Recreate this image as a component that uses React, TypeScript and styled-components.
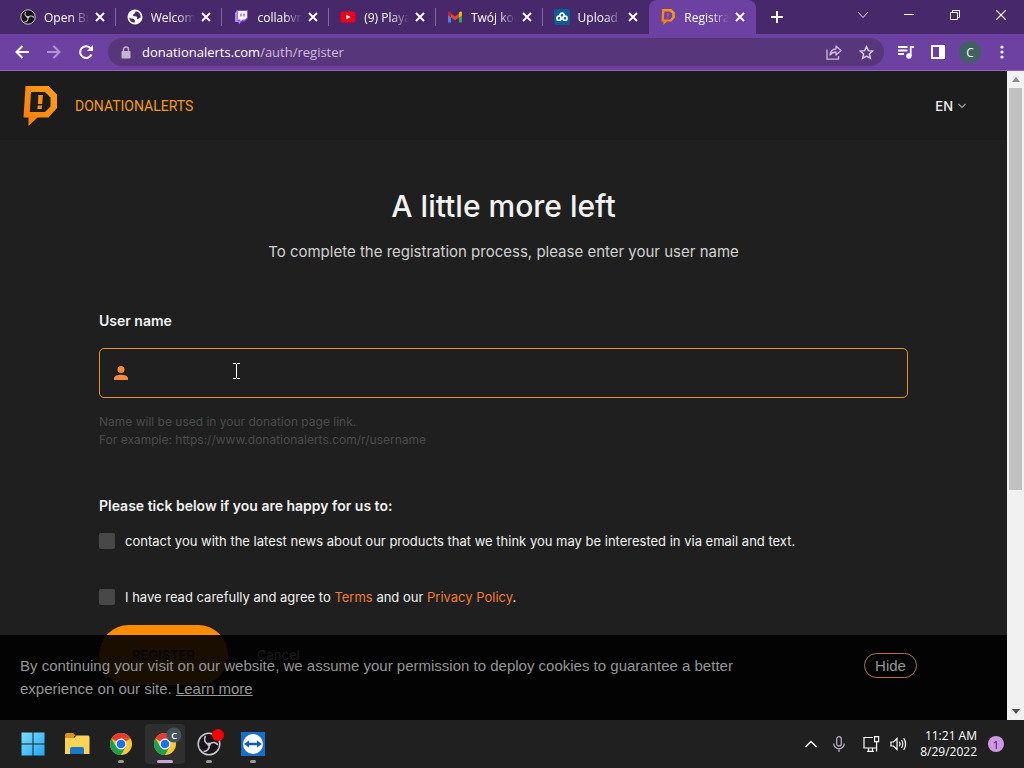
import React from "react";
import styled, { createGlobalStyle } from "styled-components";

const ui = '"Open Sans", "Noto Sans", sans-serif';
const inter = 'Inter, "Liberation Sans", sans-serif';

const Global = createGlobalStyle`
  * { box-sizing: border-box; }
  body { margin: 0; background: #1f1f1f; font-family: ${ui}; }
  button { border: 0; background: none; padding: 0; color: inherit; font: inherit; }
  a { color: inherit; text-decoration: none; }
  svg { display: block; flex: none; }
  h1, h2, p { margin: 0; }
`;

const Desktop = styled.div`
  display: flex;
  flex-direction: column;
  height: 100vh;
  overflow: hidden;
`;

/* Browser window */
const TabStrip = styled.header`
  display: flex;
  align-items: stretch;
  height: 34px;
  padding-left: 9px;
  background: #47296b;
  color: #fff;
`;
const Tabs = styled.div`
  display: flex;
  flex: 0 1 747px;
  min-width: 0;
`;
const Tab = styled.div<{ $active?: boolean; $last?: boolean }>`
  display: flex;
  align-items: center;
  flex: 1 1 0;
  min-width: 0;
  padding: 0 8px 0 11px;
  font-size: 12px;
  border-radius: 8px 8px 0 0;
  background-color: ${(p) => (p.$active ? "#6c41a2" : "transparent")};
  background-image: ${(p) =>
    p.$active || p.$last ? "none" : "linear-gradient(#8467a6, #8467a6)"};
  background-size: 1px 18px;
  background-position: right center;
  background-repeat: no-repeat;
`;
const TabTitle = styled.span`
  flex: 1;
  min-width: 0;
  margin: 0 3px 0 8px;
  overflow: hidden;
  white-space: nowrap;
  mask-image: linear-gradient(to right, #000 60%, transparent);
`;
const IconButton = styled.button<{ $w?: number }>`
  display: flex;
  align-items: center;
  justify-content: center;
  flex: none;
  width: ${(p) => p.$w ?? 16}px;
  align-self: center;
`;
const WindowButtons = styled.div`
  display: flex;
  margin-left: auto;
  height: 30px;
`;
const Toolbar = styled.div`
  display: flex;
  align-items: center;
  height: 37px;
  padding: 0 6px;
  background: #6c41a2;
  border-bottom: 1px solid #8a6ab0;
  color: #fff;
`;
const AddressBar = styled.div`
  display: flex;
  align-items: center;
  flex: 1;
  height: 28px;
  margin: 0 6px;
  padding: 0 2px 0 13px;
  border-radius: 14px;
  background: #58367b;
  color: #cdbddf;
`;
const Address = styled.div`
  flex: 1;
  margin-left: 11px;
  font-size: 13px;
  line-height: 20px;
  white-space: nowrap;
  b { font-weight: 400; color: #fff; }
`;
const Avatar = styled.span`
  display: grid;
  place-items: center;
  width: 22px;
  height: 22px;
  border-radius: 50%;
  background: #3f6161;
  color: #fff;
  font-size: 12px;
`;

/* Site */
const Viewport = styled.div`
  display: flex;
  flex: 1;
  min-height: 0;
`;
const Site = styled.div`
  position: relative;
  flex: 1;
  min-width: 0;
  overflow: hidden;
  background: #1f1f1f;
  color: #f2f2f2;
  font-family: ${inter};
`;
const SiteHeader = styled.div`
  display: flex;
  align-items: center;
  height: 69px;
  padding: 0 41px 0 22px;
  background: #1c1c1c;
`;
const Brand = styled.a`
  display: flex;
  align-items: center;
  gap: 17px;
  color: #f29a1c;
  font-family: Roboto, sans-serif;
  font-size: 14px;
`;
const Language = styled.button`
  display: flex;
  align-items: center;
  gap: 5px;
  margin-left: auto;
  font-size: 13px;
  font-weight: 500;
`;
const Content = styled.main`
  padding: 44px 99px 0;
`;
const Title = styled.h1`
  font-size: 30px;
  font-weight: 500;
  line-height: 44px;
  text-align: center;
`;
const Subtitle = styled.p`
  margin-top: 12px;
  color: #d2d2d2;
  font-size: 15px;
  line-height: 24px;
  text-align: center;
`;
const FieldLabel = styled.label`
  display: block;
  margin-top: 47px;
  font-size: 14px;
  font-weight: 600;
  line-height: 20px;
`;
const Field = styled.div`
  display: flex;
  align-items: center;
  height: 50px;
  margin-top: 17px;
  padding-left: 14px;
  border: 1px solid #e8922a;
  border-radius: 5px;
`;
const TextInput = styled.input`
  flex: 1;
  height: 100%;
  margin-left: 10px;
  border: 0;
  outline: 0;
  background: none;
  color: #fff;
  font: 14px ${inter};
`;
const Hint = styled.p`
  margin-top: 15px;
  color: #4b4b4b;
  font-size: 12px;
  line-height: 18px;
`;
const Consent = styled.h2`
  margin-top: 47px;
  font-size: 14px;
  font-weight: 600;
  line-height: 20px;
`;
const CheckRow = styled.div<{ $top: number }>`
  display: flex;
  align-items: center;
  gap: 10px;
  margin-top: ${(p) => p.$top}px;
  font-size: 13px;
  line-height: 20px;
  a { color: #f07c32; }
`;
const Checkbox = styled.input`
  appearance: none;
  flex: none;
  width: 16px;
  height: 16px;
  margin: 0;
  border-radius: 2px;
  background: #484848;
`;
const Actions = styled.div`
  display: flex;
  align-items: center;
  gap: 29px;
  margin-top: 18px;
  font-size: 13px;
`;
const Submit = styled.button`
  width: 129px;
  height: 60px;
  border-radius: 30px;
  background: linear-gradient(#ff8a00, #f59c07);
  color: #4a3c2c;
  font-size: 13px;
  font-weight: 600;
`;
const CookieBar = styled.aside`
  position: absolute;
  inset: auto 0 0 0;
  display: flex;
  align-items: flex-start;
  justify-content: space-between;
  padding: 18px 90px 20px 20px;
  background: rgba(0, 0, 0, 0.9);
  color: #969696;
  font: 15px/23px "Liberation Sans", sans-serif;
  a { text-decoration: underline; }
`;
const CookieText = styled.p`
  max-width: 730px;
  padding-top: 1px;
`;
const HideButton = styled.button`
  width: 53px;
  height: 25px;
  border: 1px solid #b5714f;
  border-radius: 13px;
`;
const TextCursor = styled.svg`
  position: absolute;
  left: 233px;
  top: 292px;
`;
const Scrollbar = styled.div`
  display: flex;
  flex-direction: column;
  align-items: center;
  width: 17px;
  background: #f1f1f1;
`;
const ScrollArrow = styled.svg`
  margin: 6px 0;
`;
const Thumb = styled.div`
  width: 13px;
  height: 62%;
  margin-bottom: auto;
  background: #c1c1c1;
`;

/* Taskbar */
const Taskbar = styled.footer`
  display: flex;
  align-items: center;
  height: 48px;
  padding: 0 20px 0 13px;
  background: #202020;
  color: #fff;
`;
const Apps = styled.div`
  display: flex;
  gap: 4px;
`;
const AppButton = styled.button<{ $active?: boolean; $mark?: boolean }>`
  display: flex;
  flex-direction: column;
  align-items: center;
  width: 40px;
  height: 40px;
  padding-top: 8px;
  border-radius: 4px;
  background: ${(p) => (p.$active ? "#2f2f2f" : "none")};
  &::after {
    content: "";
    width: ${(p) => (p.$active ? 16 : 6)}px;
    height: 3px;
    margin-top: 4px;
    border-radius: 2px;
    background: ${(p) => (p.$active ? "#c9a5d8" : p.$mark ? "#9a9a9a" : "transparent")};
  }
`;
const Tray = styled.div`
  display: flex;
  align-items: center;
  margin-left: auto;
`;
const Clock = styled.time`
  margin: 0 11px 0 13px;
  font-size: 12px;
  line-height: 16px;
  text-align: right;
`;
const Notice = styled.span`
  display: grid;
  place-items: center;
  width: 16px;
  height: 16px;
  border-radius: 50%;
  background: #cf97e6;
  color: #2a1833;
  font-size: 11px;
`;

const Close = () => (
  <svg width="10" height="10" viewBox="0 0 10 10" stroke="#fff" strokeWidth="1.8">
    <path d="M1 1l8 8M9 1l-8 8" />
  </svg>
);

const ObsIcon = ({ size }: { size: number }) => (
  <svg width={size} height={size} viewBox="0 0 24 24" fill="none">
    <circle cx="12" cy="12" r="10.8" fill="#17151a" stroke="#c9c6cc" strokeWidth="1.5" />
    <g stroke="#c9c6cc" strokeWidth="1.6">
      <path d="M12 12.5C7.5 11 6.5 7.5 8.5 4" />
      <path d="M12 12.5C15.5 9.3 19 10.2 21 13" />
      <path d="M12 12.5C12.8 17.2 10 19.5 6.5 19.5" />
    </g>
    <circle cx="12" cy="12.4" r="1.8" fill="#c9c6cc" />
  </svg>
);

const GlobeIcon = () => (
  <svg width="16" height="16" viewBox="0 0 16 16">
    <circle cx="8" cy="8" r="7.5" fill="#fff" />
    <path d="M9 2.200C7.500 3 8.500 4.500 6.800 5.200S6 7.200 8 7.300 10.500 8 10 9.500 12 9.500 13.800 8.200C13.800 5 12 2.700 9 2.200ZM2.200 8.500C3.500 9.800 6 9 7 10.300S8.500 12 7.200 13.800C4.500 13.500 2.400 11.500 2.200 8.500Z" fill="#47296b" />
  </svg>
);

const TwitchIcon = () => (
  <svg width="16" height="16" viewBox="0 0 16 16">
    <path d="M4 1h11v8l-3.5 3.5H9L6 15.5v-3H3V4Z" fill="#9146ff" />
    <path d="M2 4l2.5-3v11H7v3l-2-2H2Z" fill="#b58aff" />
    <path d="M5 2h9v6.5L12 10.500H9.500l-2 2v-2H5Z" fill="#fff" />
    <path d="M8 4.500v3M11 4.500v3" stroke="#9146ff" strokeWidth="1.3" />
  </svg>
);

const YoutubeIcon = () => (
  <svg width="16" height="16" viewBox="0 0 16 16">
    <rect x="0.5" y="2.5" width="15" height="11" rx="2.8" fill="#f00018" />
    <path d="M6.3 5.6v4.800L10.500 8Z" fill="#fff" />
  </svg>
);

const GmailIcon = () => (
  <svg width="16" height="16" viewBox="0 0 16 16">
    <path d="M1 4v9.500h3V7Z" fill="#4285f4" />
    <path d="M15 4v9.500h-3V7Z" fill="#34a853" />
    <path d="M4 4.500v4L8 11.300l4-2.800v-4L8 7.500Z" fill="#ea4335" />
    <path d="M1 4c0-2 1.500-2 3-.5v5L1 6.200Z" fill="#c5221f" />
    <path d="M15 4c0-2-1.500-2-3-.5v5l3-2.300Z" fill="#fbbc04" />
  </svg>
);

const UploadIcon = () => (
  <svg width="16" height="16" viewBox="0 0 16 16" fill="none" stroke="#fff" strokeWidth="1.6">
    <rect width="16" height="16" rx="3" fill="#0c5c99" stroke="none" />
    <circle cx="5" cy="9.200" r="2.100" />
    <circle cx="11" cy="9.200" r="2.100" />
    <path d="M6 7a2.200 2.200 0 1 1 4.200 0L6.800 10.500" />
  </svg>
);

const AlertsIcon = ({ w, h, tab }: { w: number; h: number; tab?: boolean }) => (
  <svg width={w} height={h} viewBox="0 0 35 40">
    <defs>
      <linearGradient id="brandFill" x1="0" y1="1" x2="1" y2="0">
        <stop stopColor="#f57b0b" />
        <stop offset="1" stopColor="#fda019" />
      </linearGradient>
    </defs>
    <path
      fill="url(#brandFill)"
      fillRule="evenodd"
      d="M3 0H26L34.500 8.500V22L26 31.500H15L6 40V31.500H1ZM8.500 6L7.300 26H22.500L28 20.500V11.500L22.500 6Z"
    />
    {tab ? (
      <path d="M15 10h6l-1 9h-6ZM13 21h6v3h-6Z" fill="#a04fae" />
    ) : (
      <path d="M15.800 9h4.600l-.7 9h-4.300ZM15.200 19.600h4.300l-.3 3.400h-4.300Z" fill="#f89016" />
    )}
  </svg>
);

const ChromeIcon = ({ badge }: { badge?: boolean }) => (
  <svg width="24" height="24" viewBox="0 0 24 24" overflow="visible">
    <circle cx="12" cy="12" r="11" fill="#fcc934" />
    <path d="M12 12L2.470 6.500A11 11 0 0 1 21.530 6.500L12 6.500Z" fill="#e33b2e" />
    <path d="M21.530 6.500H12V12Z" fill="#e33b2e" />
    <path d="M2.470 6.500A11 11 0 0 0 12 23L16.760 14.750 12 12 7.240 14.750Z" fill="#1e9e4a" />
    <circle cx="12" cy="12" r="5.500" fill="#fff" />
    <circle cx="12" cy="12" r="4.300" fill="#1a73e8" />
    {badge && (
      <>
        <circle cx="21" cy="3" r="7.500" fill="#44545c" />
        <text x="21" y="6.500" fill="#fff" fontSize="9" fontWeight="600" textAnchor="middle" fontFamily="Open Sans, sans-serif">C</text>
      </>
    )}
  </svg>
);

const tabs = [
  { title: "Open Broadcaster", icon: <ObsIcon size={16} /> },
  { title: "Welcome to", icon: <GlobeIcon /> },
  { title: "collabvm", icon: <TwitchIcon /> },
  { title: "(9) Playa", icon: <YoutubeIcon /> },
  { title: "Twój kod", icon: <GmailIcon /> },
  { title: "Upload", icon: <UploadIcon /> },
  { title: "Registration", icon: <AlertsIcon w={16} h={16} tab /> },
];

export default function App() {
  return (
    <Desktop>
      <Global />
      <TabStrip>
        <Tabs>
          {tabs.map((t, i) => (
            <Tab key={t.title} $active={i === 6} $last={i === 5}>
              {t.icon}
              <TabTitle>{t.title}</TabTitle>
              <IconButton aria-label="Close tab"><Close /></IconButton>
            </Tab>
          ))}
        </Tabs>
        <IconButton $w={42} aria-label="New tab">
          <svg width="12" height="12" viewBox="0 0 12 12" stroke="#fff" strokeWidth="2"><path d="M6 0v12M0 6h12" /></svg>
        </IconButton>
        <WindowButtons>
          <IconButton $w={46} aria-label="Search tabs">
            <svg width="12" height="8" viewBox="0 0 12 8" fill="none" stroke="#e6dcf0"><path d="M1 1l5 5.500L11 1" /></svg>
          </IconButton>
          <IconButton $w={46} aria-label="Minimize">
            <svg width="10" height="10" viewBox="0 0 10 10" stroke="#fff"><path d="M0 4.500h10" /></svg>
          </IconButton>
          <IconButton $w={46} aria-label="Restore">
            <svg width="10" height="10" viewBox="0 0 10 10" fill="none" stroke="#fff"><path d="M.5 2.500h7v7h-7ZM2.500 2.500v-2h7v7h-2" /></svg>
          </IconButton>
          <IconButton $w={46} aria-label="Close">
            <svg width="10" height="10" viewBox="0 0 10 10" stroke="#fff" strokeWidth="1.2"><path d="M0 0l10 10M10 0L0 10" /></svg>
          </IconButton>
        </WindowButtons>
      </TabStrip>
      <Toolbar>
        <IconButton $w={32} aria-label="Back">
          <svg width="14" height="14" viewBox="0 0 14 14" fill="none" stroke="#fff" strokeWidth="2"><path d="M14 7H1.500M7.500 1l-6 6 6 6" /></svg>
        </IconButton>
        <IconButton $w={32} aria-label="Forward">
          <svg width="14" height="14" viewBox="0 0 14 14" fill="none" stroke="#b195d3" strokeWidth="2"><path d="M0 7h12.500M6.500 1l6 6-6 6" /></svg>
        </IconButton>
        <IconButton $w={32} aria-label="Reload">
          <svg width="14" height="14" viewBox="0 0 14 14" fill="none"><path d="M12.500 9.500A5.900 5.900 0 1 1 11.300 3" stroke="#fff" strokeWidth="2" /><path d="M14 0v6H8Z" fill="#fff" /></svg>
        </IconButton>
        <AddressBar>
          <svg width="10" height="13" viewBox="0 0 10 13" fill="none"><rect x="0.5" y="5" width="9" height="7.500" rx="1" fill="#c3b4d2" /><path d="M2.500 5.500V3.500a2.500 2.500 0 0 1 5 0v2" stroke="#c3b4d2" strokeWidth="1.4" /></svg>
          <Address><b>donationalerts.com</b>/auth/register</Address>
          <IconButton $w={32} aria-label="Share">
            <svg width="16" height="15" viewBox="0 0 16 15" fill="none" stroke="#cdbddf" strokeWidth="1.3"><path d="M1 4.500v9.700h11.500V11" /><path d="M4 10C4.500 6 6.500 4 10 4V1l5 4.500-5 4.500V7C7.500 7 5.500 8 4 10Z" strokeLinejoin="round" /></svg>
          </IconButton>
          <IconButton $w={32} aria-label="Bookmark">
            <svg width="15" height="15" viewBox="0 0 24 24" fill="none" stroke="#d8cbe6" strokeWidth="2.3"><path d="M12 2.500l2.900 6.500 7 .7-5.300 4.700 1.600 7L12 17.700 5.800 21.400l1.600-7L2.100 9.700l7-.7Z" /></svg>
          </IconButton>
        </AddressBar>
        <IconButton $w={32} aria-label="Media">
          <svg width="16" height="14" viewBox="0 0 16 14" fill="none" stroke="#fff" strokeWidth="1.8"><path d="M0 2h9.500M0 5.500h9.500M0 9h6M12.700 11V2H16" /><circle cx="10.900" cy="11" r="1.800" fill="#fff" /></svg>
        </IconButton>
        <IconButton $w={32} aria-label="Side panel">
          <svg width="14" height="14" viewBox="0 0 14 14"><path d="M0 0h14v14H0ZM2 2v10h6V2Z" fill="#fff" fillRule="evenodd" /></svg>
        </IconButton>
        <IconButton $w={32} aria-label="Profile"><Avatar>C</Avatar></IconButton>
        <IconButton $w={32} aria-label="Menu">
          <svg width="4" height="14" viewBox="0 0 4 14" fill="#fff"><circle cx="2" cy="2" r="1.600" /><circle cx="2" cy="7" r="1.600" /><circle cx="2" cy="12" r="1.600" /></svg>
        </IconButton>
      </Toolbar>
      <Viewport>
        <Site>
          <SiteHeader>
            <Brand href="#"><AlertsIcon w={36} h={40} />DONATIONALERTS</Brand>
            <Language>
              EN
              <svg width="8" height="6" viewBox="0 0 8 6" fill="none" stroke="#aaa" strokeWidth="1.2"><path d="M.5.800L4 4.500 7.500.800" /></svg>
            </Language>
          </SiteHeader>
          <Content>
            <Title>A little more left</Title>
            <Subtitle>To complete the registration process, please enter your user name</Subtitle>
            <FieldLabel htmlFor="username">User name</FieldLabel>
            <Field>
              <svg width="14" height="14" viewBox="0 0 14 14" fill="#f58a3c"><circle cx="7" cy="3.500" r="3.500" /><path d="M0 14v-1.500C0 9.800 4 8.800 7 8.800s7 1 7 3.700V14Z" /></svg>
              <TextInput id="username" />
            </Field>
            <Hint>
              Name will be used in your donation page link.
              <br />
              For example: https://www.donationalerts.com/r/username
            </Hint>
            <Consent>Please tick below if you are happy for us to:</Consent>
            <CheckRow $top={15}>
              <Checkbox type="checkbox" id="news" />
              <label htmlFor="news">contact you with the latest news about our products that we think you may be interested in via email and text.</label>
            </CheckRow>
            <CheckRow $top={36}>
              <Checkbox type="checkbox" id="terms" />
              <label htmlFor="terms">I have read carefully and agree to <a href="#">Terms</a> and our <a href="#">Privacy Policy</a>.</label>
            </CheckRow>
            <Actions>
              <Submit>REGISTER</Submit>
              <a href="#">Cancel</a>
            </Actions>
          </Content>
          <TextCursor width="7" height="16" viewBox="0 0 7 16" fill="none" stroke="#fff"><path d="M0 .5h3M4 .5h3M3.500 1v14M0 15.500h3M4 15.500h3" /></TextCursor>
          <CookieBar>
            <CookieText>
              By continuing your visit on our website, we assume your permission to deploy cookies to guarantee a better experience on our site. <a href="#">Learn more</a>
            </CookieText>
            <HideButton>Hide</HideButton>
          </CookieBar>
        </Site>
        <Scrollbar>
          <ScrollArrow width="8" height="5" viewBox="0 0 8 5" fill="#8a8a8a"><path d="M4 0l4 5H0Z" /></ScrollArrow>
          <Thumb />
          <ScrollArrow width="8" height="5" viewBox="0 0 8 5" fill="#505050"><path d="M4 5l4-5H0Z" /></ScrollArrow>
        </Scrollbar>
      </Viewport>
      <Taskbar>
        <Apps>
          <AppButton aria-label="Start">
            <svg width="24" height="24" viewBox="0 0 24 24"><defs><linearGradient id="win" x1="0" y1="0" x2="1" y2="1"><stop stopColor="#7fdcff" /><stop offset="1" stopColor="#1fa8f5" /></linearGradient></defs><path d="M.5.500h11v11H.5ZM12.500.500h11v11h-11ZM.5 12.500h11v11H.5ZM12.500 12.500h11v11h-11Z" fill="url(#win)" /></svg>
          </AppButton>
          <AppButton aria-label="Files">
            <svg width="26" height="24" viewBox="0 0 26 24"><path d="M1 3q0-2 2-2h6l3 3h-2v5H1Z" fill="#d9951c" /><path d="M1 6h9l2.500-2.500H24q1.500 0 1.500 1.500v17H1Z" fill="#fcd354" /><path d="M6 22v-5q0-2 2-2h10q2 0 2 2v5Z" fill="#1979c8" /></svg>
          </AppButton>
          <AppButton $mark aria-label="Chrome"><ChromeIcon /></AppButton>
          <AppButton $active aria-label="Chrome profile"><ChromeIcon badge /></AppButton>
          <AppButton $mark aria-label="OBS">
            <svg width="24" height="24" viewBox="0 0 24 24" overflow="visible"><ObsIcon size={24} /><circle cx="21" cy="3" r="6" fill="#f80000" /></svg>
          </AppButton>
          <AppButton $mark aria-label="TeamViewer">
            <svg width="24" height="24" viewBox="0 0 24 24"><rect width="24" height="24" fill="#1470c9" /><circle cx="12" cy="12" r="10" fill="#fff" /><path d="M3 12l5-3.500v2.300h8V8.500l5 3.500-5 3.500v-2.300H8v2.300Z" fill="#135fae" /></svg>
          </AppButton>
        </Apps>
        <Tray>
          <IconButton $w={28} aria-label="Hidden icons">
            <svg width="12" height="8" viewBox="0 0 12 8" fill="none" stroke="#fff" strokeWidth="1.3"><path d="M.5 7L6 1.500 11.500 7" /></svg>
          </IconButton>
          <IconButton $w={28} aria-label="Microphone">
            <svg width="12" height="16" viewBox="0 0 12 16" fill="none" stroke="#b9a9c0" strokeWidth="1.3"><rect x="3.700" y="0.700" width="4.600" height="9.300" rx="2.300" /><path d="M.7 7.500a5.300 5.300 0 0 0 10.600 0M6 12.800V16" /></svg>
          </IconButton>
          <IconButton $w={36} aria-label="Network">
            <svg width="17" height="16" viewBox="0 0 17 16" fill="none" stroke="#fff" strokeWidth="1.2"><path d="M10 1.500H1v10.500h12.500V9M4 15.400h7M5.500 12v3.400M9.500 12v3.400M11.600.600h4v5h-4ZM13.600 5.600v10" /></svg>
          </IconButton>
          <IconButton $w={18} aria-label="Volume">
            <svg width="17" height="14" viewBox="0 0 17 14" fill="none" stroke="#fff" strokeWidth="1.2"><path d="M1 5h2.500L7 1.500v11L3.500 9H1ZM9.300 4.800q1.400 2.200 0 4.400M11.500 3q2.600 4 0 8M13.700 1.200q3.800 5.800 0 11.600" /></svg>
          </IconButton>
          <Clock>11:21 AM<br />8/29/2022</Clock>
          <Notice>1</Notice>
        </Tray>
      </Taskbar>
    </Desktop>
  );
}
